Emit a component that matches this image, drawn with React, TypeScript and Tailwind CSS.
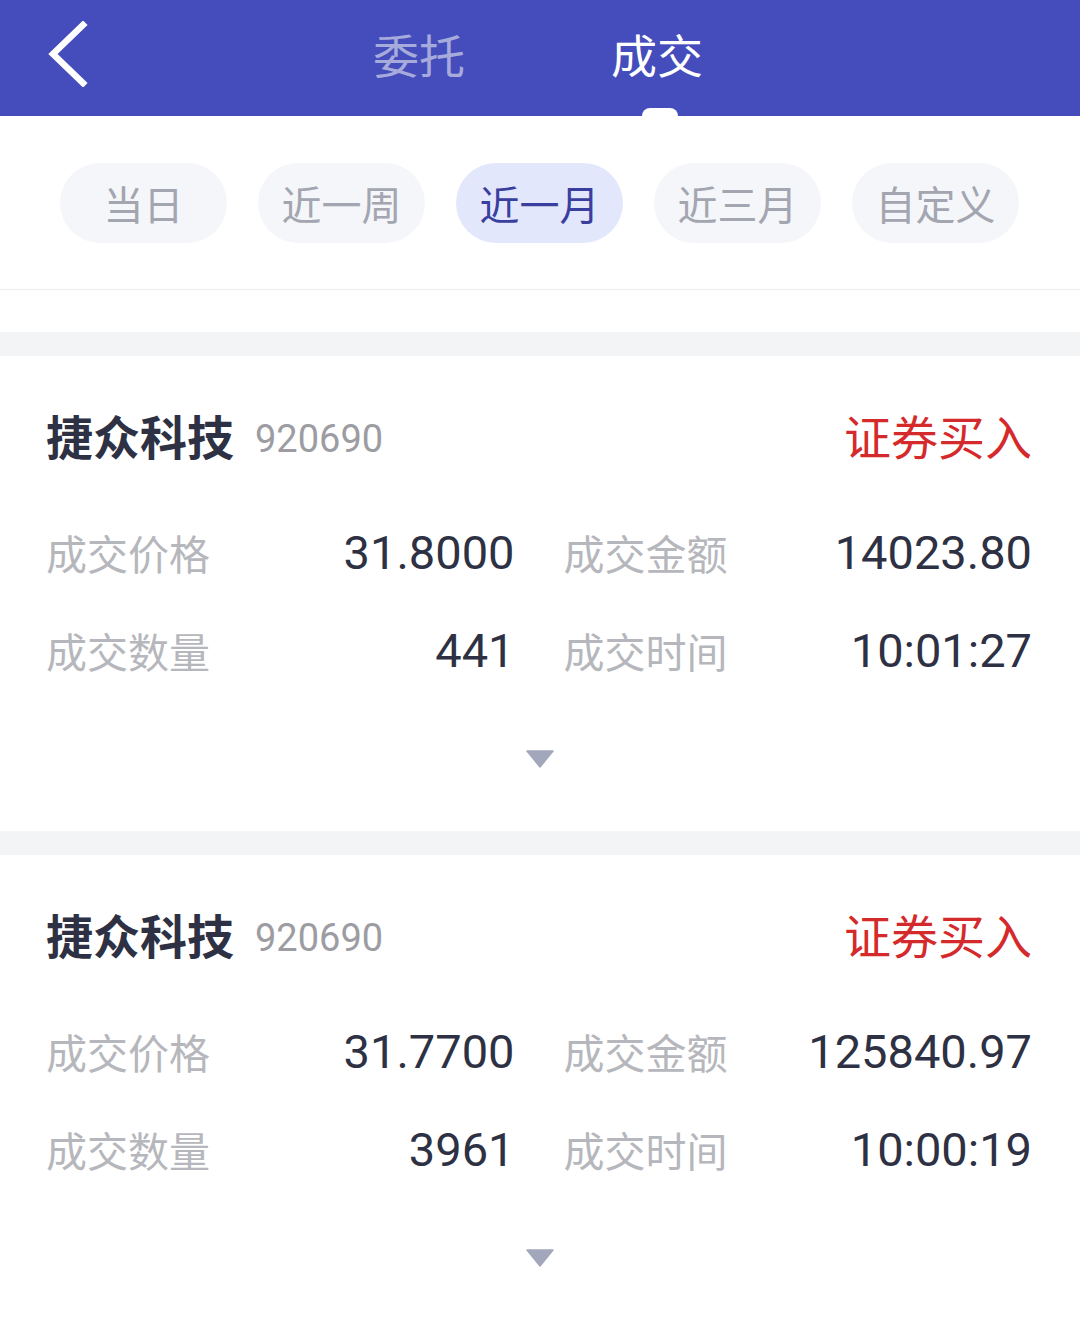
import React from "react";

const cjk = { fontFamily: "'Noto Sans CJK SC', 'Noto Sans', sans-serif" };
const num = { fontFamily: "Roboto, 'Noto Sans CJK SC', sans-serif" };

const pills = ["当日", "近一周", "近一月", "近三月", "自定义"];

type Trade = { price: string; amount: string; qty: string; time: string };

const trades: Trade[] = [
  { price: "31.8000", amount: "14023.80", qty: "441", time: "10:01:27" },
  { price: "31.7700", amount: "125840.97", qty: "3961", time: "10:00:19" },
];

function Card({ t }: { t: Trade }) {
  return (
    <div className="bg-white h-[475px] flex flex-col">
      <div className="h-[60px] mt-[48px] flex items-center pl-[46px] pr-[48px]">
        <span className="text-[47px] font-bold text-[#2d3143] leading-none" style={cjk}>
          捷众科技
        </span>
        <span className="ml-[21px] mt-[9px] text-[38px] text-[#9c9ca2] leading-none" style={num}>
          920690
        </span>
        <span className="ml-auto text-[47px] text-[#d52a2b] leading-none" style={cjk}>
          证券买入
        </span>
      </div>
      <div className="mt-[39px] grid grid-cols-2 gap-x-[49px] pl-[46px] pr-[48px]">
        {[
          ["成交价格", t.price, "成交金额", t.amount],
          ["成交数量", t.qty, "成交时间", t.time],
        ].map((row, i) => (
          <React.Fragment key={i}>
            <div className="h-[98px] flex items-center justify-between">
              <span className="text-[41px] text-[#b6b7bc] leading-none" style={cjk}>
                {row[0]}
              </span>
              <span className="text-[47px] text-[#2d3143] leading-none" style={num}>
                {row[1]}
              </span>
            </div>
            <div className="h-[98px] flex items-center justify-between">
              <span className="text-[41px] text-[#b6b7bc] leading-none" style={cjk}>
                {row[2]}
              </span>
              <span className="text-[47px] text-[#2d3143] leading-none" style={num}>
                {row[3]}
              </span>
            </div>
          </React.Fragment>
        ))}
      </div>
      <div className="flex justify-center mt-[51px]">
        <svg width="28" height="18" viewBox="0 0 28 18">
          <path d="M1 1 H27 L14 17 Z" fill="#a3a7bb" stroke="#a3a7bb" strokeWidth="1.5" strokeLinejoin="round" />
        </svg>
      </div>
    </div>
  );
}

export default function App() {
  return (
    <div className="w-[1080px] h-[1331px] bg-white overflow-hidden" style={cjk}>
      <div className="h-[116px] bg-[#444dbb] relative flex items-center justify-center">
        <svg className="absolute left-[45px] top-[21px]" width="46" height="66" viewBox="0 0 46 66">
          <path d="M38 4 L8 33 L38 62" fill="none" stroke="white" strokeWidth="6.5" strokeLinecap="square" strokeLinejoin="miter" />
        </svg>
        <div className="flex items-center gap-[146px] -ml-[4px] -mt-[10px]">
          <span className="text-[46px] text-[#a6abdb] leading-none">委托</span>
          <span className="text-[46px] text-white leading-none">成交</span>
        </div>
        <div className="absolute left-[642px] bottom-0 w-[36px] h-[8px] rounded-t-full rounded-b-[2px] bg-white" />
      </div>
      <div className="h-[174px] flex items-center pl-[60px] gap-[31px] border-b border-[#ececee]">
        {pills.map((p) => (
          <div
            key={p}
            className={
              p === "近一月"
                ? "w-[167px] h-[80px] rounded-full bg-[#e3e7fc] flex items-center justify-center text-[40px] text-[#3a3f9f] leading-none"
                : "w-[167px] h-[80px] rounded-full bg-[#f5f6fa] flex items-center justify-center text-[40px] text-[#a3a5b0] leading-none"
            }
          >
            {p}
          </div>
        ))}
      </div>
      <div className="h-[42px] bg-white" />
      <div className="h-[24px] bg-[#f3f4f6]" />
      <Card t={trades[0]} />
      <div className="h-[24px] bg-[#f3f4f6]" />
      <Card t={trades[1]} />
    </div>
  );
}
